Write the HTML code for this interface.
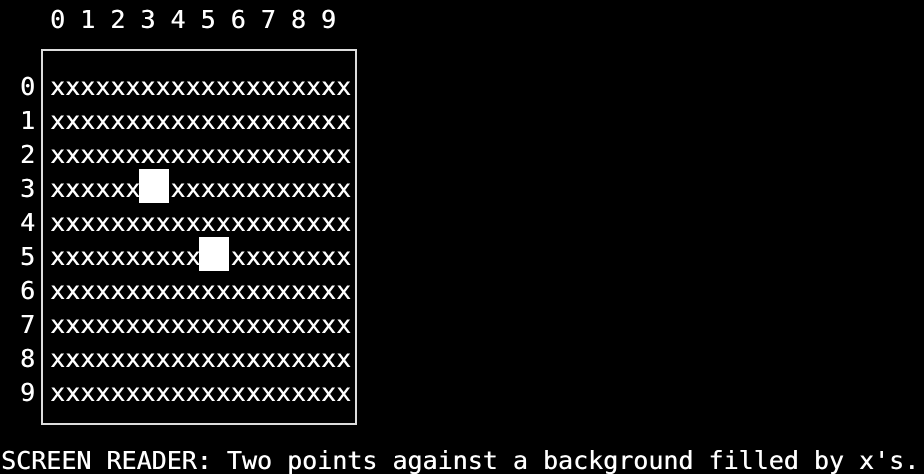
<!DOCTYPE html>
<html><head><meta charset="utf-8"><style>
html,body{margin:0;padding:0;background:#000;width:924px;height:474px;overflow:hidden}
body{position:relative;font-family:"DejaVu Sans Mono","Liberation Mono",monospace;font-size:25px;color:#fff;text-shadow:0.4px 0 0 #fff}
.l{position:absolute;line-height:34px;height:34px;white-space:pre;margin-top:3px}
.box{position:absolute;left:41px;top:49px;width:312px;height:372px;border:2px solid #ddd}
.blk{position:absolute;background:#fff;height:34px;width:30px}
</style></head><body>
<div class="l" style="left:50px;top:0">0 1 2 3 4 5 6 7 8 9</div>
<div class="box"></div>
<div class="l" style="left:20px;top:67px">0</div><div class="l" style="left:50px;top:67px">xxxxxxxxxxxxxxxxxxxx</div>
<div class="l" style="left:20px;top:101px">1</div><div class="l" style="left:50px;top:101px">xxxxxxxxxxxxxxxxxxxx</div>
<div class="l" style="left:20px;top:135px">2</div><div class="l" style="left:50px;top:135px">xxxxxxxxxxxxxxxxxxxx</div>
<div class="l" style="left:20px;top:169px">3</div><div class="l" style="left:50px;top:169px">xxxxxx  xxxxxxxxxxxx</div>
<div class="l" style="left:20px;top:203px">4</div><div class="l" style="left:50px;top:203px">xxxxxxxxxxxxxxxxxxxx</div>
<div class="l" style="left:20px;top:237px">5</div><div class="l" style="left:50px;top:237px">xxxxxxxxxx  xxxxxxxx</div>
<div class="l" style="left:20px;top:271px">6</div><div class="l" style="left:50px;top:271px">xxxxxxxxxxxxxxxxxxxx</div>
<div class="l" style="left:20px;top:305px">7</div><div class="l" style="left:50px;top:305px">xxxxxxxxxxxxxxxxxxxx</div>
<div class="l" style="left:20px;top:339px">8</div><div class="l" style="left:50px;top:339px">xxxxxxxxxxxxxxxxxxxx</div>
<div class="l" style="left:20px;top:373px">9</div><div class="l" style="left:50px;top:373px">xxxxxxxxxxxxxxxxxxxx</div>
<div class="blk" style="left:139px;top:169px"></div>
<div class="blk" style="left:199px;top:237px"></div>
<div class="l" style="left:1px;top:441px">SCREEN READER: Two points against a background filled by x's.</div>
</body></html>
